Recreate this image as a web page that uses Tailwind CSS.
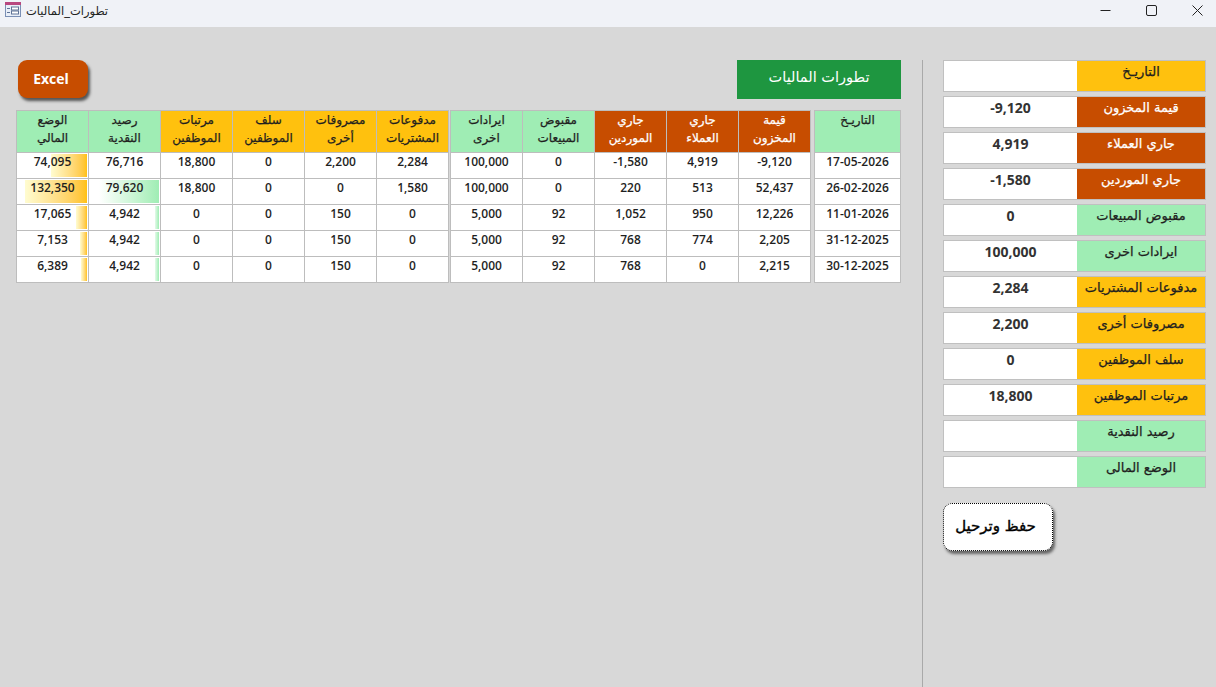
<!DOCTYPE html>
<html lang="ar">

<head>
    <meta charset="UTF-8" />
    <meta name="viewport" content="width=device-width, initial-scale=1.0" />
    <title>تطورات_الماليات</title>
    <script src="https://cdn.jsdelivr.net/npm/@tailwindcss/browser@4"></script>
</head>

<body class="w-[1216px] h-[687px] overflow-hidden bg-[#d8d8d8] font-['Open_Sans','DejaVu_Sans',sans-serif] text-[#1f1f1f]">

    <!-- Title bar -->
    <div class="h-[27px] bg-[#f0f2f7] flex items-start pl-[5px] pt-[2px]">
        <svg width="16" height="15" viewBox="0 0 16 15" class="shrink-0">
            <rect x="0.5" y="0.5" width="15" height="14" fill="#e8eef8" stroke="#7a8fb5" />
            <rect x="0" y="0" width="16" height="3" fill="#b8477f" />
            <path d="M2 6.5h3M2 10.5h3" stroke="#5f7396" />
            <rect x="6.5" y="5" width="7" height="3" fill="#fff" stroke="#5f7396" />
            <rect x="6.5" y="9" width="7" height="3" fill="#fff" stroke="#5f7396" />
        </svg>
        <span dir="rtl" class="ml-[5px] text-[11.5px] leading-[18px] text-[#222] font-['DejaVu_Sans',sans-serif]">تطورات_الماليات</span>
        <div class="ml-auto flex items-start -mt-[2px] pr-[13px] gap-[35px]">
            <svg width="11" height="20" viewBox="0 0 11 20"><path d="M0.5 10.5h10" stroke="#222" /></svg>
            <svg width="11" height="20" viewBox="0 0 11 20"><rect x="0.5" y="5.5" width="10" height="10" rx="1.5" fill="none" stroke="#222" /></svg>
            <svg width="11" height="20" viewBox="0 0 11 20"><path d="M0.5 5.5l10 10M10.5 5.5l-10 10" stroke="#222" /></svg>
        </div>
    </div>

    <div class="flex h-[660px]">
        <!-- Trends table -->
        <div class="w-[922px] pt-[33px] pl-[16px]">
            <div class="flex justify-between items-start w-[885px] h-[50px]">
                <button class="ml-[2px] w-[70px] h-[38px] pr-[4px] pb-[2px] rounded-[9px] bg-[#c74d00] text-white text-[14px] font-bold shadow-[2px_3px_3px_#555]">Excel</button>
                <div dir="rtl" class="w-[164px] h-[39px] pb-[4px] bg-[#1e9640] text-white text-[14.5px] flex items-center justify-center font-['DejaVu_Sans',sans-serif]">تطورات الماليات</div>
            </div>

            <div class="flex text-[12px] leading-[18px] font-semibold text-center">
                <!-- Left group -->
                <table class="border-collapse table-fixed w-[433px] [&_td]:border [&_td]:border-[#bdbdbd] [&_td]:bg-white [&_td]:h-[26px] [&_td]:align-top [&_td]:relative [&_th]:border [&_th]:border-[#bdbdbd] [&_th]:h-[42px] [&_th]:font-normal [&_th]:text-[12px] [&_th]:leading-[18px] [&_th]:align-top [&_th]:font-['DejaVu_Sans',sans-serif] [&_th]:[-webkit-text-stroke:0.25px_currentColor]">
                    <tr>
                        <th class="bg-[#9fedb4]">الوضع<br>المالي</th>
                        <th class="bg-[#9fedb4]">رصيد<br>النقدية</th>
                        <th class="bg-[#ffc10e]">مرتبات<br>الموظفين</th>
                        <th class="bg-[#ffc10e]">سلف<br>الموظفين</th>
                        <th class="bg-[#ffc10e]">مصروفات<br>أخرى</th>
                        <th class="bg-[#ffc10e]">مدفوعات<br>المشتريات</th>
                    </tr>
                    <tr>
                        <td><div class="absolute right-[1px] top-[1px] bottom-[1px] w-[36px] bg-gradient-to-r from-[#fffcd0] to-[#ffc10e]"></div><span class="relative">74,095</span></td>
                        <td>76,716</td><td>18,800</td><td>0</td><td>2,200</td><td>2,284</td>
                    </tr>
                    <tr>
                        <td><div class="absolute right-[1px] top-[1px] bottom-[1px] w-[62px] bg-gradient-to-r from-[#fffcd0] to-[#ffc10e]"></div><span class="relative">132,350</span></td>
                        <td><div class="absolute right-[1px] top-[1px] bottom-[1px] w-[60px] bg-gradient-to-r from-white to-[#9fedb4]"></div><span class="relative">79,620</span></td>
                        <td>18,800</td><td>0</td><td>0</td><td>1,580</td>
                    </tr>
                    <tr>
                        <td><div class="absolute right-[1px] top-[1px] bottom-[1px] w-[11px] bg-gradient-to-r from-[#fffcd0] to-[#ffc10e]"></div><span class="relative">17,065</span></td>
                        <td><div class="absolute right-[1px] top-[1px] bottom-[1px] w-[4px] bg-gradient-to-r from-[#e4faea] to-[#9fedb4]"></div><span class="relative">4,942</span></td>
                        <td>0</td><td>0</td><td>150</td><td>0</td>
                    </tr>
                    <tr>
                        <td><div class="absolute right-[1px] top-[1px] bottom-[1px] w-[7px] bg-gradient-to-r from-[#fffcd0] to-[#ffc10e]"></div><span class="relative">7,153</span></td>
                        <td><div class="absolute right-[1px] top-[1px] bottom-[1px] w-[4px] bg-gradient-to-r from-[#e4faea] to-[#9fedb4]"></div><span class="relative">4,942</span></td>
                        <td>0</td><td>0</td><td>150</td><td>0</td>
                    </tr>
                    <tr>
                        <td><div class="absolute right-[1px] top-[1px] bottom-[1px] w-[6px] bg-gradient-to-r from-[#fffcd0] to-[#ffc10e]"></div><span class="relative">6,389</span></td>
                        <td><div class="absolute right-[1px] top-[1px] bottom-[1px] w-[4px] bg-gradient-to-r from-[#e4faea] to-[#9fedb4]"></div><span class="relative">4,942</span></td>
                        <td>0</td><td>0</td><td>150</td><td>0</td>
                    </tr>
                </table>

                <!-- Middle group -->
                <table class="ml-[1px] border-collapse table-fixed w-[361px] [&_td]:border [&_td]:border-[#bdbdbd] [&_td]:bg-white [&_td]:h-[26px] [&_td]:align-top [&_th]:border [&_th]:border-[#bdbdbd] [&_th]:h-[42px] [&_th]:font-normal [&_th]:text-[12px] [&_th]:leading-[18px] [&_th]:align-top [&_th]:font-['DejaVu_Sans',sans-serif] [&_th]:[-webkit-text-stroke:0.25px_currentColor]">
                    <tr>
                        <th class="bg-[#9fedb4]">ايرادات<br>اخرى</th>
                        <th class="bg-[#9fedb4]">مقبوض<br>المبيعات</th>
                        <th class="bg-[#c74d00] text-white">جاري<br>الموردين</th>
                        <th class="bg-[#c74d00] text-white">جاري<br>العملاء</th>
                        <th class="bg-[#c74d00] text-white">قيمة<br>المخزون</th>
                    </tr>
                    <tr><td>100,000</td><td>0</td><td>-1,580</td><td>4,919</td><td>-9,120</td></tr>
                    <tr><td>100,000</td><td>0</td><td>220</td><td>513</td><td>52,437</td></tr>
                    <tr><td>5,000</td><td>92</td><td>1,052</td><td>950</td><td>12,226</td></tr>
                    <tr><td>5,000</td><td>92</td><td>768</td><td>774</td><td>2,205</td></tr>
                    <tr><td>5,000</td><td>92</td><td>768</td><td>0</td><td>2,215</td></tr>
                </table>

                <!-- Date column -->
                <table class="ml-[3px] border-collapse table-fixed w-[87px] [&_td]:border [&_td]:border-[#bdbdbd] [&_td]:bg-white [&_td]:h-[26px] [&_td]:align-top [&_th]:border [&_th]:border-[#bdbdbd] [&_th]:h-[42px] [&_th]:font-normal [&_th]:text-[12px] [&_th]:leading-[18px] [&_th]:align-top [&_th]:font-['DejaVu_Sans',sans-serif] [&_th]:[-webkit-text-stroke:0.25px_currentColor]">
                    <tr><th class="bg-[#9fedb4]">التاريـخ</th></tr>
                    <tr><td>17-05-2026</td></tr>
                    <tr><td>26-02-2026</td></tr>
                    <tr><td>11-01-2026</td></tr>
                    <tr><td>31-12-2025</td></tr>
                    <tr><td>30-12-2025</td></tr>
                </table>
            </div>
        </div>

        <!-- Entry panel -->
        <div class="flex-1 border-l border-[#a9a9a9] mt-[33px] pl-[20px]">
            <div class="w-[263px] flex flex-col gap-[4px] text-[14px] font-bold text-[#333] text-center [&>div]:flex [&>div]:h-[32px] [&>div]:border [&>div]:border-[#c0c0c0] [&_span+span]:pt-[1px] [&_span+span]:text-[13px] [&_span+span]:font-normal [&_span+span]:font-['DejaVu_Sans',sans-serif] [&_span+span]:[-webkit-text-stroke:0.25px_currentColor]">
                <div><span class="w-[133px] bg-white"></span><span dir="rtl" class="flex-1 bg-[#ffc10e] text-[#1f1f1f]">التاريـخ</span></div>
                <div><span class="w-[133px] bg-white">-9,120</span><span dir="rtl" class="flex-1 bg-[#c74d00] text-white">قيمة المخزون</span></div>
                <div><span class="w-[133px] bg-white">4,919</span><span dir="rtl" class="flex-1 bg-[#c74d00] text-white">جاري العملاء</span></div>
                <div><span class="w-[133px] bg-white">-1,580</span><span dir="rtl" class="flex-1 bg-[#c74d00] text-white">جاري الموردين</span></div>
                <div><span class="w-[133px] bg-white">0</span><span dir="rtl" class="flex-1 bg-[#9fedb4] text-[#1f1f1f]">مقبوض المبيعات</span></div>
                <div><span class="w-[133px] bg-white">100,000</span><span dir="rtl" class="flex-1 bg-[#9fedb4] text-[#1f1f1f]">ايرادات اخرى</span></div>
                <div><span class="w-[133px] bg-white">2,284</span><span dir="rtl" class="flex-1 bg-[#ffc10e] text-[#1f1f1f]">مدفوعات المشتريات</span></div>
                <div><span class="w-[133px] bg-white">2,200</span><span dir="rtl" class="flex-1 bg-[#ffc10e] text-[#1f1f1f]">مصروفات أخرى</span></div>
                <div><span class="w-[133px] bg-white">0</span><span dir="rtl" class="flex-1 bg-[#ffc10e] text-[#1f1f1f]">سلف الموظفين</span></div>
                <div><span class="w-[133px] bg-white">18,800</span><span dir="rtl" class="flex-1 bg-[#ffc10e] text-[#1f1f1f]">مرتبات الموظفين</span></div>
                <div><span class="w-[133px] bg-white"></span><span dir="rtl" class="flex-1 bg-[#9fedb4] text-[#1f1f1f]">رصيد النقدية</span></div>
                <div><span class="w-[133px] bg-white"></span><span dir="rtl" class="flex-1 bg-[#9fedb4] text-[#1f1f1f]">الوضع المالى</span></div>
            </div>
            <button dir="rtl" class="mt-[15px] w-[110px] h-[48px] pr-[5px] pb-[2px] rounded-[9px] bg-white border border-dotted border-black text-[15px] text-black shadow-[2px_3px_3px_#666] font-['DejaVu_Sans',sans-serif] [-webkit-text-stroke:0.4px_currentColor]">حفظ وترحيل</button>
        </div>
    </div>
</body>

</html>
